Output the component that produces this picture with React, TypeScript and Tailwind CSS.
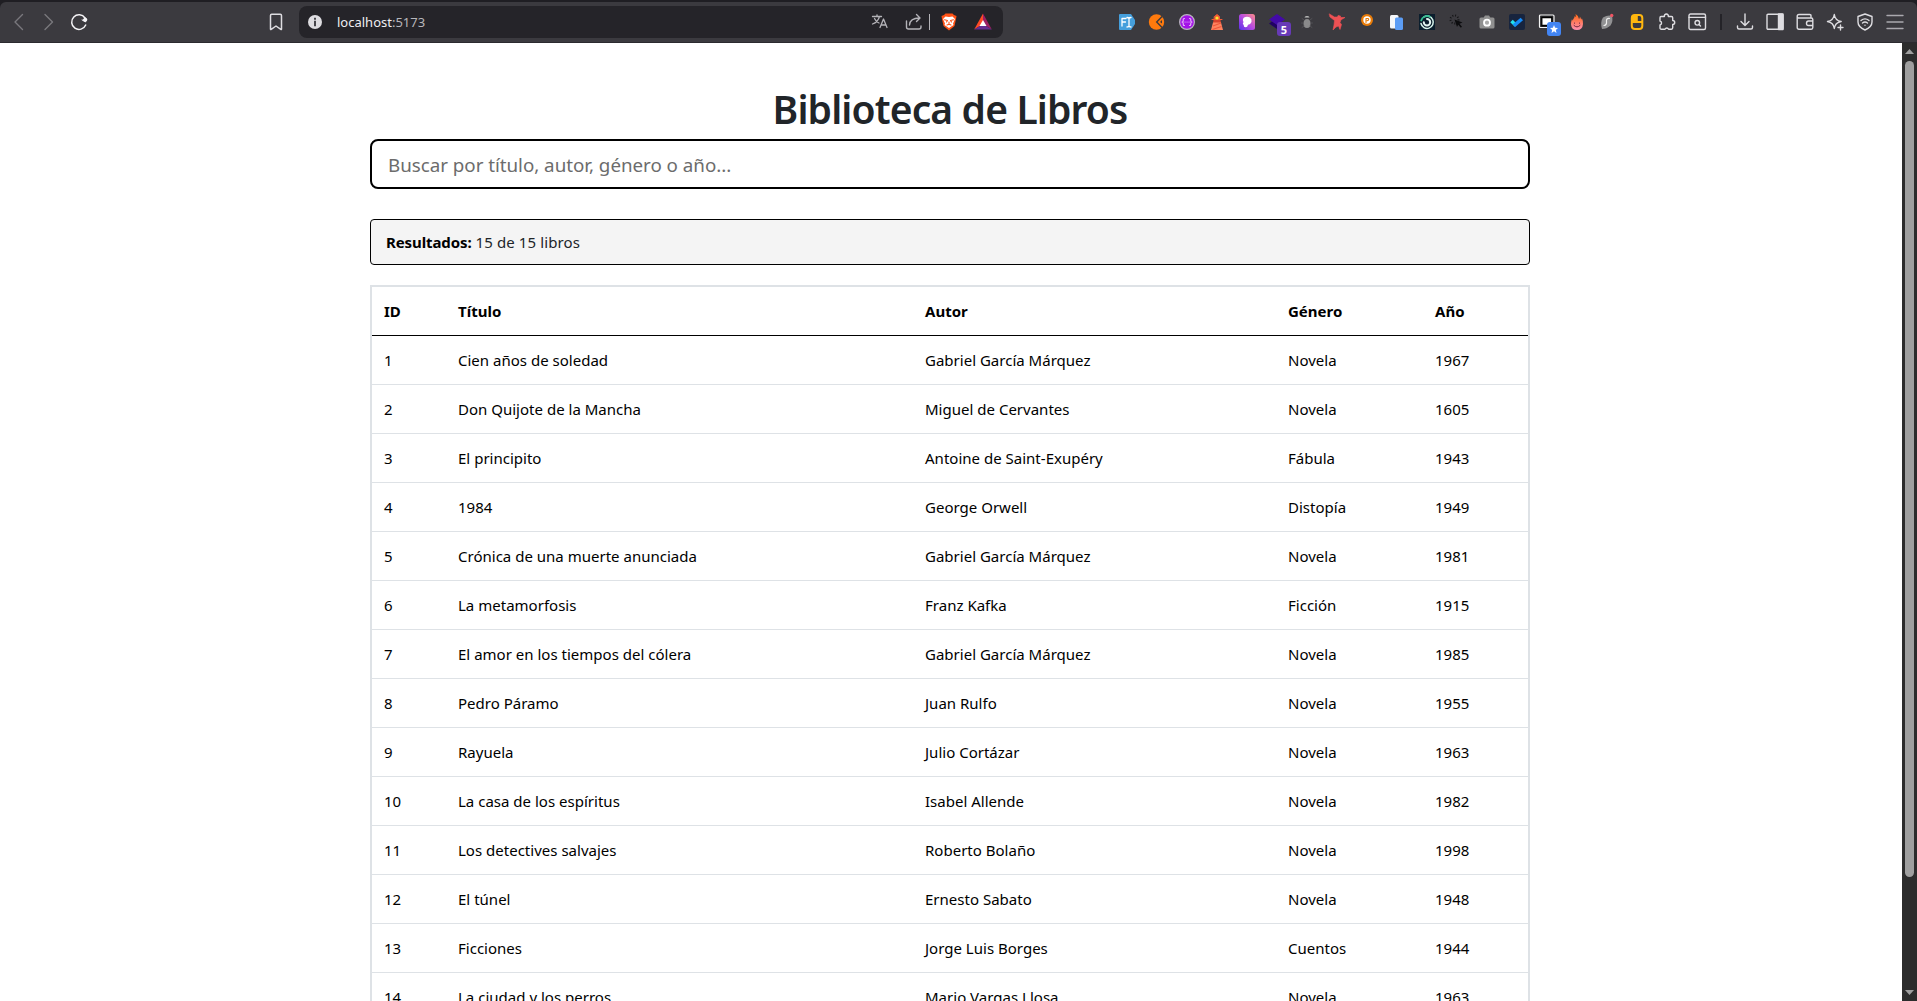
import type { ReactNode } from "react";

const books = [
  ["Cien años de soledad", "Gabriel García Márquez", "Novela", "1967"],
  ["Don Quijote de la Mancha", "Miguel de Cervantes", "Novela", "1605"],
  ["El principito", "Antoine de Saint-Exupéry", "Fábula", "1943"],
  ["1984", "George Orwell", "Distopía", "1949"],
  ["Crónica de una muerte anunciada", "Gabriel García Márquez", "Novela", "1981"],
  ["La metamorfosis", "Franz Kafka", "Ficción", "1915"],
  ["El amor en los tiempos del cólera", "Gabriel García Márquez", "Novela", "1985"],
  ["Pedro Páramo", "Juan Rulfo", "Novela", "1955"],
  ["Rayuela", "Julio Cortázar", "Novela", "1963"],
  ["La casa de los espíritus", "Isabel Allende", "Novela", "1982"],
  ["Los detectives salvajes", "Roberto Bolaño", "Novela", "1998"],
  ["El túnel", "Ernesto Sabato", "Novela", "1948"],
  ["Ficciones", "Jorge Luis Borges", "Cuentos", "1944"],
  ["La ciudad y los perros", "Mario Vargas Llosa", "Novela", "1963"],
];

// Every toolbar icon sits in a 30px cell and is drawn on a 16-unit grid.
function Cell({ children, color = "text-[#dedde1]" }: { children: ReactNode; color?: string }) {
  return (
    <div className={`flex w-[30px] shrink-0 items-center justify-center ${color}`}>
      <svg
        className="h-4 w-4 overflow-visible"
        viewBox="0 0 16 16"
        fill="none"
        stroke="currentColor"
        strokeWidth="1.4"
        strokeLinecap="round"
        strokeLinejoin="round"
      >
        {children}
      </svg>
    </div>
  );
}

function Extensions() {
  return (
    <>
      <Cell>
        <path d="M1 0h11l4 6v4l-4 6H1q-1 0-1-1V1q0-1 1-1z" fill="#459fdc" stroke="none" />
        <path d="M3 12V4.500h4M3 8h3.500M8 3.500q1.700 0 2 1 .3-1 2-1M10 4.500v8M8 13q1.700 0 2-1 .3 1 2 1" stroke="#fff" strokeWidth="1.300" />
      </Cell>
      <Cell>
        <circle cx="7.500" cy="8" r="7.700" fill="#ff7a0d" stroke="none" />
        <path d="M13.300 2.300L7.700 8l5.600 5.700" stroke="#3b3a3f" strokeWidth="1.400" strokeLinecap="butt" strokeLinejoin="miter" />
        <path d="M13 6v3.500L11 8z" fill="#3b3a3f" stroke="none" />
      </Cell>
      <Cell>
        <circle cx="8" cy="8" r="7.400" fill="#a313e8" stroke="#b9b3bf" strokeWidth="1.200" />
        <path d="M5.500 4.500q-1.500 0-1.300 1.700T3 8q1.400 0 1.200 1.800t1.300 1.700M10.500 4.500q1.500 0 1.300 1.700T13 8q-1.400 0-1.200 1.800t-1.300 1.700M6 8h.1M8 8h.1M10 8h.1" stroke="#e7bcf8" strokeWidth="1.100" />
      </Cell>
      <Cell>
        <path d="M4.500 6h7l.6 3H4z" fill="#d8412d" stroke="none" />
        <path d="M4 8.500h8l2 7.500H2z" fill="#ff835f" stroke="none" />
        <path d="M4 12l8-3M3.500 15.500l9-3" stroke="#f1573b" strokeWidth="1.300" strokeLinecap="butt" />
        <path d="M5.500 2.500L8 .5l2.500 2v2.500h-5zM3 5.500h10" fill="#f25b36" stroke="#f25b36" strokeWidth="1" />
        <circle cx="8" cy="4" r="1.600" fill="#ffe52e" stroke="none" />
      </Cell>
      <Cell>
        <defs>
          <linearGradient id="violet" x1="0" y1="1" x2="1" y2="0">
            <stop stopColor="#5731e8" />
            <stop offset=".5" stopColor="#b74be2" />
            <stop offset="1" stopColor="#ff8d87" />
          </linearGradient>
        </defs>
        <rect width="16" height="16" rx="2.500" fill="url(#violet)" stroke="none" />
        <path d="M5 3.500q3-1.500 6 0 2.200 1.500 1.500 4.500-1 2.500-3.500 2.700-.5 2.600-2.500 2.600-2 0-1.800-2.300Q3 10 4.500 8 3 5.500 5 3.500z" fill="#fff" stroke="none" />
      </Cell>
      <div className="relative flex">
        <Cell>
          <path d="M0 9.500l8-5.500 8 6-8 5z" fill="#210263" stroke="none" />
          <path d="M0 5.500L8 0l8 5.500-8 5.500z" fill="#430aa8" stroke="none" />
        </Cell>
        <span className="absolute left-[15px] top-[20px] flex h-[14px] w-[14px] items-center justify-center rounded-[3px] bg-[#673ab7] font-['Open_Sans',sans-serif] text-[11px] font-bold leading-none text-white">
          5
        </span>
      </div>
      <Cell>
        <path d="M5.500 3.500q0-1.500 2.500-1.500t2.500 1.500z" fill="#c3c3c3" stroke="none" />
        <ellipse cx="8" cy="9.500" rx="3.500" ry="4.500" fill="#8a8a8b" stroke="none" />
        <path d="M5 6L3 4.500M11 6l2-1.500M4.500 9H2.500M11.500 9h2M5 12l-2 1.500M11 12l2 1.500" stroke="#5b5a5e" strokeWidth=".7" />
      </Cell>
      <Cell>
        <path d="M.5 0l5 3h3L9 1.500l2.500 .5v1.500h4.500L12 5.800l-1 2.700 1.500 2L11 15.500l-1.500-3.500-2.500 1L4 16l1-5L5.500 6.500 1 3z" fill="#ee5154" stroke="#ee5154" strokeWidth=".6" />
      </Cell>
      <Cell>
        <g transform="translate(0 -2)">
          <circle cx="8" cy="8" r="6" fill="#e87b08" stroke="none" />
          <circle cx="8" cy="8" r="3.700" fill="#fff" stroke="none" />
          <path d="M7 10.500V6.500h1.500q1.300 0 1.200 1T8 8.700" stroke="#e87b08" strokeWidth="1.100" />
        </g>
      </Cell>
      <Cell>
        <rect x="1" y="1" width="8.500" height="13.500" rx="1.500" fill="#f5f7fa" stroke="none" />
        <rect x="6" y="3.500" width="8" height="12.500" rx="1.500" fill="#5c9df5" stroke="none" />
      </Cell>
      <Cell>
        <rect width="16" height="16" fill="#0b1e2d" stroke="none" />
        <path d="M5 2.800A6.200 6.200 0 1 1 2 9.500" stroke="#d7f4eb" strokeWidth="1.500" />
        <path d="M2.200 6.500A6.200 6.200 0 0 1 11 2.700" stroke="#37bd91" strokeWidth="1.800" />
        <path d="M4.800 8.200A3.200 3.200 0 1 0 8 5" stroke="#e3f5f1" strokeWidth="2" />
      </Cell>
      <Cell>
        <circle cx="5.500" cy="5.500" r="4" stroke="#161618" strokeWidth="2" strokeDasharray="1 1.700" strokeLinecap="butt" />
        <path d="M5.500 5.500l8 3-3 1.200 2.500 3-1.200 1-2.600-3L8 13z" fill="#0c0c0e" stroke="none" />
      </Cell>
      <Cell>
        <path d="M2 3.500h2.700L6 1.500h4l1.300 2H14q1.500 0 1.500 1.500v8q0 1.500-1.500 1.500H2Q.5 14.500.5 13V5Q.5 3.500 2 3.500z" fill="#909090" stroke="none" />
        <circle cx="8" cy="8.700" r="3" fill="#aaa" stroke="#fff" strokeWidth="1.800" />
      </Cell>
      <Cell>
        <rect width="16" height="16" rx="2" fill="#17243e" stroke="none" />
        <path d="M2.500 7l4.500 4.500" stroke="#21e2ee" strokeWidth="3.600" strokeLinecap="butt" />
        <path d="M5 11.700L12.800 5" stroke="#158bf7" strokeWidth="3.600" strokeLinecap="butt" />
      </Cell>
      <div className="relative flex">
        <Cell>
          <rect x=".5" y="1" width="14.500" height="12.500" rx="1" fill="#29292c" stroke="#f4f4f4" strokeWidth="1.200" />
          <rect x="2.800" y="3.500" width="10" height="8" fill="#fff" stroke="#000" strokeWidth="1.300" />
        </Cell>
        <span className="absolute left-[15px] top-[20px] flex h-[14px] w-[14px] items-center justify-center rounded-[3px] bg-[#4285f4]">
          <svg viewBox="0 0 10 10" className="h-[8px] w-[8px]" fill="white">
            <path d="M5 0l1.400 3.400L10 3.700 7.300 6.100 8.100 10 5 7.900 1.900 10l.8-3.900L0 3.700l3.600-.3z" />
          </svg>
        </span>
      </div>
      <Cell>
        <defs>
          <linearGradient id="fire" x1="0" y1="0" x2="0" y2="1">
            <stop stopColor="#ff6713" />
            <stop offset="1" stopColor="#ff8fb0" />
          </linearGradient>
        </defs>
        <path d="M6.500 0Q9.500 1.500 10 5q1-1 .9-2.500 1 1.500 1.200 3 .8-.5.800-1.500 1.300 3 1.100 6-.5 6-6 6t-6-5.500Q2 7.500 3 5q.2 1 .9 1.500Q4 5 5 4q.8-1 .5-2l1.500 1z" fill="url(#fire)" stroke="none" />
        <path d="M5.500 9v.3M10.500 9v.3M5 11.500q3 3 6 0" stroke="#742940" strokeWidth="1" />
      </Cell>
      <Cell>
        <path d="M4 3.500Q9 .5 13 2q1.500 5-1.500 9.500Q7.500 15 3 15 1 8 4 3.500z" fill="#919193" stroke="none" />
        <path d="M10.500 4.500Q7 4 7.500 7.500T5 11.500" stroke="#eee" strokeWidth="1.200" />
        <circle cx="12.700" cy="1.500" r="1.700" fill="#f05463" stroke="none" />
      </Cell>
      <Cell>
        <rect x="2.800" y="1" width="10.500" height="14" rx="3" stroke="#ffb70f" strokeWidth="2" />
        <path d="M7.800 1v7M3 8h10" stroke="#ffb70f" strokeWidth="2" strokeLinecap="butt" />
        <path d="M2.800 3q0-2 2-2h3v7H2.800z" fill="#ffb70f" stroke="none" />
      </Cell>
      <Cell>
        <path d="M2 2.500h3.400a2 2 0 1 1 3.900 0h3.200q1.200 0 1.200 1.200v2.800a2 2 0 1 1 0 4v3.300q0 1.400-1.300 1.400H9.600a2 2 0 0 0-3.600 0H2.300q-1.300 0-1.300-1.300v-3a2 2 0 0 0 0-3.900V3.700q0-1.200 1-1.200z" />
      </Cell>
      <Cell>
        <rect x="0" y="0" width="16.500" height="15.500" rx="1.500" />
        <path d="M0 3.400h16.500" />
        <circle cx="8.300" cy="8.800" r="2.300" />
        <path d="M10 10.500l1.500 1.500" />
      </Cell>
    </>
  );
}

function BrowserBar() {
  return (
    <header className="flex h-[43px] shrink-0 bg-[#1f1e23] pt-0.5">
      <div className="flex w-full rounded-t-[6px] border-b border-[#2b2a2f] bg-[#3b3a3f] pl-1">
        <Cell color="text-[#79787d]"><path d="M11.500 .5L4 8l7.500 7.500" /></Cell>
        <Cell color="text-[#79787d]"><path d="M4 .5L11.500 8 4 15.500" /></Cell>
        <Cell color="text-[#f4f3f6]">
          <path d="M14 4A7.300 7.300 0 1 0 14.700 11" strokeWidth="1.500" />
          <circle cx="14.300" cy="5.800" r="2" fill="currentColor" stroke="none" />
          <path d="M14.500 4v4l-3.500-2" fill="currentColor" strokeWidth=".8" />
        </Cell>
        <div className="ml-[167px] flex">
          <Cell><path d="M2.500 15V1.500q0-1.200 1.200-1.200h8.600q1.200 0 1.200 1.200V15q0 .8-.7.400L8 12l-4.800 3.400q-.7.400-.7-.4z" strokeWidth="1.500" /></Cell>
        </div>
        <div className="ml-2 mt-1 flex h-8 w-[704px] shrink-0 items-center rounded-lg bg-[#252429] pl-px">
          <Cell>
            <circle cx="8" cy="8" r="7" fill="#dedde1" stroke="none" />
            <path d="M8 7.500v4M8 4.700v.1" stroke="#2c2b30" strokeWidth="1.700" strokeLinecap="square" />
          </Cell>
          <span className="ml-[7px] pt-px font-['Noto_Sans',sans-serif] text-[13px] text-[#efeef2]">
            localhost<span className="text-[#b7b6bb]">:5173</span>
          </span>
          <div className="ml-auto mr-[5px] flex items-center">
            <Cell color="text-[#b4b3b8]">
              <path d="M.5 2.500h9M5 .8v1.700M7.500 2.500Q6 8 .5 10M2.500 4.500Q4 8 7 9M8 13.500L11.500 5 15 13.500M9.200 11h4.700" strokeWidth="1.300" />
            </Cell>
            <div className="ml-1 flex">
              <Cell color="text-[#b4b3b8]">
                <path d="M.5 7v6q0 2 2 2h10.500q2 0 2-2v-1M3.500 11Q4 4 13.500 4M10.500 .5L14 4l-3.500 3.500" />
              </Cell>
            </div>
            <span className="h-4 w-px bg-[#b4b3b8]" />
            <div className="ml-1 flex">
              <Cell>
                <path d="M4.500-.5h7l1.500 1.500L15.500 2l-.5 3-1.500 7L8 16.500 2.500 12 1 5 .5 2 3 1z" fill="#ff5215" stroke="none" />
                <path d="M4.500 2.500L8 3l3.500-.5L14 5l-2 4.500.5 1.500L8 14l-4.500-3 .5-1.500L2 5z" fill="#fff" stroke="none" />
                <path d="M3.500 5.800l3 .7-1 1.500M12.500 5.800l-3 .7 1 1.500M8 8v2.500M6 11l2-.8 2 .8" stroke="#ff5215" strokeWidth="1.100" />
              </Cell>
            </div>
            <div className="ml-1 flex">
              <Cell>
                <path d="M8-.5L-.8 15.500 8 10z" fill="#ff4a26" stroke="none" />
                <path d="M8-.5l8.800 16L8 10z" fill="#9e1f63" stroke="none" />
                <path d="M-.8 15.500h17.600L8 10z" fill="#662d91" stroke="none" />
                <path d="M8 6l3.500 6h-7z" fill="#fff" stroke="none" />
              </Cell>
            </div>
          </div>
        </div>
        <div className="ml-[109px] flex"><Extensions /></div>
        <div className="flex w-[18px] items-center justify-center">
          <span className="h-4 w-0.5 bg-[#242328]" />
        </div>
        <Cell><path d="M8 0v11M4 7.500L8 11.500l4-4M.5 12v1.500q0 1.500 1.500 1.500h12q1.500 0 1.500-1.500V12" /></Cell>
        <Cell>
          <rect x="0" y=".3" width="16" height="15" rx="1" />
          <path d="M11.500 0H16v15.600h-4.500z" fill="currentColor" />
        </Cell>
        <Cell>
          <path d="M14 4V1.700Q14 .5 12.700 .5H2Q.2 .5.2 2.300T2 4h12.300q1.500 0 1.500 1.500v8q0 1.700-1.500 1.700H2q-1.800 0-1.800-1.700V2.500M15.800 7h-4.300q-2 0-2 2.300t2 2.200h4.300" />
        </Cell>
        <Cell>
          <path d="M7.300 .5Q8 6.500 14.200 7.500 8 8.500 7.300 14.500 6.500 8.500.5 7.500 6.500 6.500 7.300.5zM13.500 11v5M11 13.500h5" />
        </Cell>
        <Cell>
          <path d="M8 0l7 2.500V8q0 5-7 8-7-3-7-8V2.500z" />
          <path d="M4 6.500q4-3.200 8 0M5.500 9q2.500-2 5 0M8 11.200v.1" />
        </Cell>
        <Cell color="text-[#aaa9ae]"><path d="M0 1.500h16M0 8h16M0 14.500h16" /></Cell>
      </div>
    </header>
  );
}

function Scrollbar() {
  return (
    <div className="flex w-[15px] shrink-0 flex-col items-center bg-[#2c2c2c]">
      <svg className="mt-1.5 h-[5px] w-[9px] shrink-0" viewBox="0 0 9 5" fill="#9f9f9f"><path d="M4.500 0L9 5H0z" /></svg>
      <div className="mt-[7px] h-[816px] w-[9px] shrink-0 rounded-full bg-[#9f9f9f]" />
      <svg className="mb-1.5 mt-auto h-[5px] w-[9px] shrink-0" viewBox="0 0 9 5" fill="#9f9f9f"><path d="M0 0h9L4.500 5z" /></svg>
    </div>
  );
}

export default function App() {
  return (
    <div className="flex h-screen flex-col overflow-hidden bg-white font-['Noto_Sans',sans-serif]">
      <BrowserBar />
      <div className="flex min-h-0 flex-1">
        <main className="flex min-w-0 flex-1 flex-col items-center overflow-hidden text-[15px] tracking-[0.01px] text-black">
          <div className="w-[1160px] shrink-0 -translate-x-px">
            <h1 className="mt-[42px] h-[54px] text-center text-[39px] font-semibold leading-[48px] tracking-[-0.86px] text-[#212529]">
              Biblioteca de Libros
            </h1>
            <input
              className="block h-[50px] w-full rounded-lg border-2 border-black bg-white px-4 pt-0.5 text-[18.8px] tracking-[-0.03px] text-[#212529] outline-none placeholder:text-[#6c6c6c]"
              placeholder="Buscar por título, autor, género o año..."
            />
            <div className="mt-[30px] flex h-[46px] items-center rounded-[4px] border border-black bg-[#f4f4f4] px-[15px] text-[#212529]">
              <p><strong className="font-bold tracking-[-0.1px] text-black">Resultados:</strong> <span className="tracking-[0.12px]">15 de 15 libros</span></p>
            </div>
            <div className="mt-5 border-2 border-[#dee2e6]">
              <div className="grid h-[49px] grid-cols-[74px_467px_363px_147px_105px] items-center border-b border-black font-bold">
                {["ID", "Título", "Autor", "Género", "Año"].map((label) => (
                  <span key={label} className="pl-3">{label}</span>
                ))}
              </div>
              {books.map((book, i) => (
                <div
                  key={book[0]}
                  className="grid h-[49px] grid-cols-[74px_467px_363px_147px_105px] items-center border-b border-[#dee2e6]"
                >
                  {[String(i + 1), ...book].map((value, column) => (
                    <span key={column} className="pl-3">{value}</span>
                  ))}
                </div>
              ))}
            </div>
          </div>
        </main>
        <Scrollbar />
      </div>
    </div>
  );
}
